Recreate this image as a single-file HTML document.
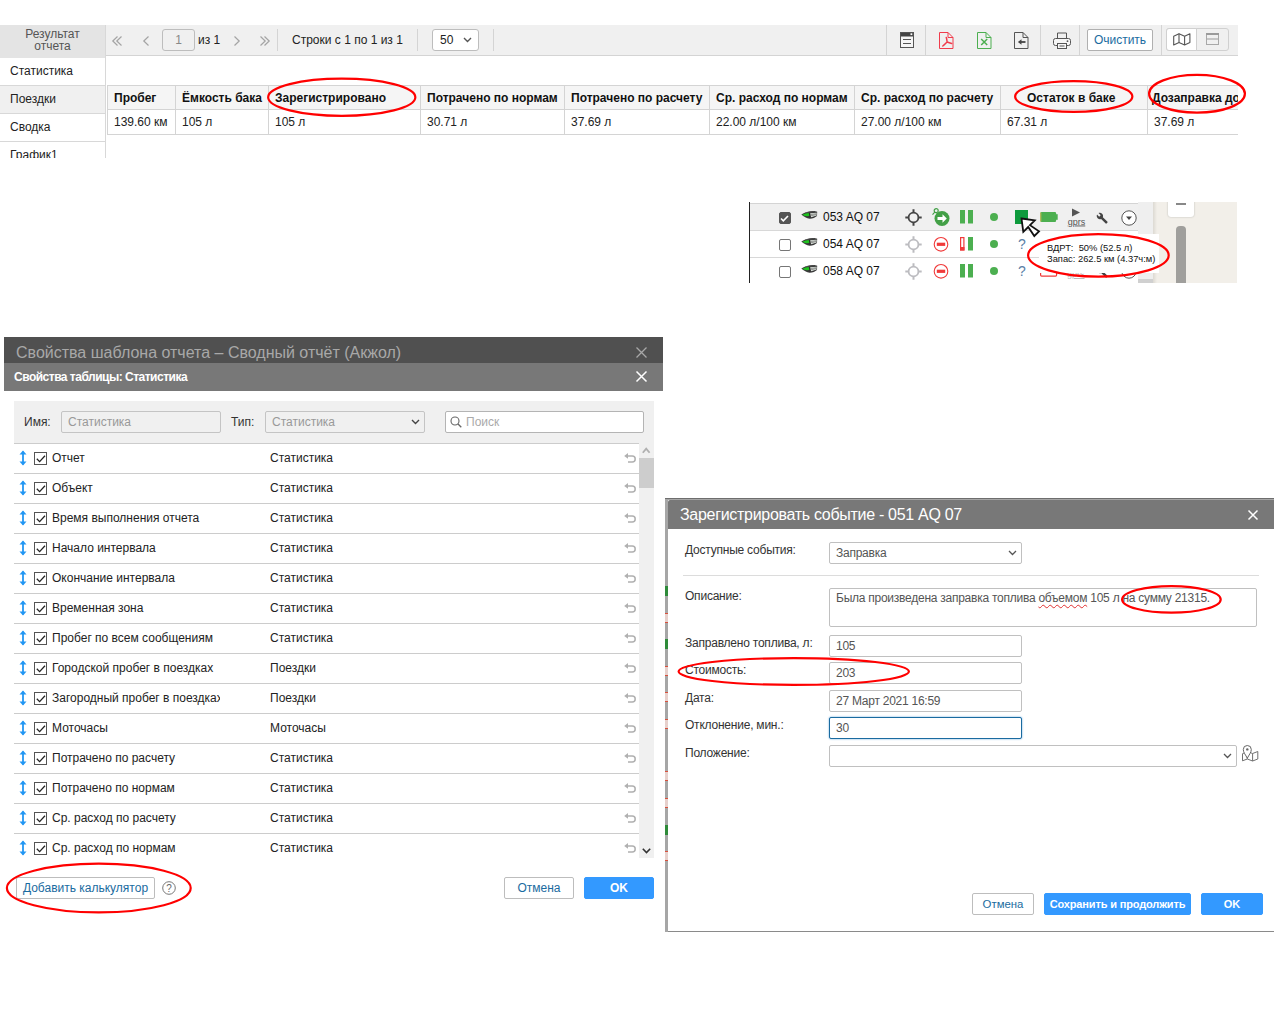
<!DOCTYPE html>
<html lang="ru">
<head>
<meta charset="utf-8">
<title>Отчёт</title>
<style>
*{box-sizing:border-box;margin:0;padding:0}
html,body{width:1280px;height:1024px;overflow:hidden;background:#fff}
body{position:relative;font-family:"Liberation Sans",Arial,sans-serif;font-size:12px;color:#222}
.abs{position:absolute}
.t{position:absolute;white-space:nowrap;line-height:14px}
svg{position:absolute;overflow:visible}
.ell{position:absolute;border:2px solid #e8121c;border-radius:50%}

/* ---------- section 1: report result ---------- */
#s1{position:absolute;left:0;top:25px;width:1238px;height:133px;overflow:hidden;background:#fff}
#s1 .side{position:absolute;left:0;top:0;width:106px;height:133px;border-right:1px solid #d8d8d8}
#s1 .side .hd{position:absolute;left:0;top:0;width:105px;height:33px;background:#e4e4e4;color:#555;text-align:center;line-height:12px;padding-top:3px}
#s1 .side .it{position:absolute;left:0;width:105px;height:28px;border-bottom:1px solid #d8d8d8;padding-left:10px;line-height:27px;color:#222}
#s1 .bar{position:absolute;left:106px;top:0;width:1132px;height:31px;background:#f0f0f0;border-bottom:1px solid #d4d4d4}
#s1 .sep{position:absolute;top:4px;width:1px;height:22px;background:#d4d4d4}
#s1 .pg{position:absolute;color:#aaa;font-size:17px;line-height:20px;top:4px}
#s1 .box{position:absolute;top:4px;height:22px;border:1px solid #bdbdbd;border-radius:3px;background:#fff}
table.res{position:absolute;left:107px;top:60px;border-collapse:collapse;table-layout:fixed;width:1160px}
table.res td,table.res th{border:1px solid #d4d4d4;padding:0 0 0 6px;text-align:left;white-space:nowrap;overflow:hidden;font-size:12px}
table.res th{background:#f5f5f5;height:24px;font-weight:bold;color:#111}
table.res td{height:25px;color:#222}

/* ---------- section 2: unit list ---------- */
#s2{position:absolute;left:749px;top:202px;width:488px;height:81px;overflow:hidden;background:#fff}
#s2 .row{position:absolute;left:1px;width:388px;height:27px;border-top:1px solid #d8d8d8;background:#fff}
#s2 .nm{position:absolute;left:73px;top:6px;font-size:12px;line-height:14px;color:#111;white-space:nowrap}
#s2 .cb{position:absolute;left:29px;top:8px;width:12px;height:12px;border:1px solid #767676;border-radius:2px;background:#fff}
#s2 .q{position:absolute;left:268px;top:5px;font-size:14px;line-height:16px;color:#5b7fa6}

/* ---------- section 3: table properties dialog ---------- */
#s3{position:absolute;left:4px;top:337px;width:659px;height:600px}
#s3 .t1{position:absolute;left:0;top:0;width:659px;height:26px;background:#505050;color:#a8a8a8;font-size:16px;line-height:24px;padding:4px 0 0 12px;white-space:nowrap;overflow:hidden}
#s3 .t2{position:absolute;left:0;top:26px;width:659px;height:28px;background:#787878;color:#fff;font-weight:bold;font-size:12px;line-height:28px;padding-left:10px;letter-spacing:-.5px}
#s3 .flt{position:absolute;left:10px;top:64px;width:640px;height:43px;background:#f0f0f0}
#s3 .in{position:absolute;top:10px;height:22px;border:1px solid #c4c4c4;border-radius:2px;background:#f0f0f0;color:#999;line-height:20px;padding-left:6px;font-size:12px}
#s3 .lst{position:absolute;left:10px;top:106px;width:625px;height:414px;overflow:hidden}
#s3 .r{position:relative;height:30px;border-top:1px solid #ccc;font-size:12px;line-height:14px;color:#222}
#s3 .r .a{position:absolute;left:38px;top:7px;width:168px;overflow:hidden;white-space:nowrap}
#s3 .r .b{position:absolute;left:256px;top:7px;white-space:nowrap}
#s3 .r .c{position:absolute;left:20px;top:8px;width:13px;height:13px;border:1px solid #555;background:#fff}
.btn{position:absolute;height:22px;border:1px solid #bdbdbd;border-radius:2px;background:#fff;color:#1a6ba0;font-size:12px;line-height:20px;text-align:center;white-space:nowrap}
.btn.p{background:#3399ff;border-color:#3399ff;color:#fff;font-weight:bold}

/* ---------- section 4: register event dialog ---------- */
#s4{position:absolute;left:665px;top:498px;width:609px;height:434px;overflow:hidden}
#s4 .dlg{position:absolute;left:3px;top:2px;width:606px;height:432px;background:#fff;border-bottom:1px solid #8a8a8a}
#s4 .tt{position:absolute;left:0;top:0;width:606px;height:29px;background:#787878;color:#fff;font-size:16px;line-height:29px;padding-left:12px;white-space:nowrap;letter-spacing:-.3px;border-radius:2px 0 0 0}
#s4 .lb{position:absolute;left:17px;font-size:12px;line-height:14px;color:#333;white-space:nowrap;letter-spacing:-.22px}
#s4 .in{position:absolute;left:161px;width:193px;height:22px;border:1px solid #c0c0c0;border-radius:2px;background:#fff;color:#555;font-size:12px;line-height:20px;padding-left:6px;white-space:nowrap;letter-spacing:-.25px}
</style>
</head>
<body>

<!-- ================= SECTION 1 ================= -->
<div id="s1">
  <div class="side">
    <div class="hd">Результат<br>отчета</div>
    <div class="it" style="top:33px">Статистика</div>
    <div class="it" style="top:61px;background:#f0f0f0">Поездки</div>
    <div class="it" style="top:89px">Сводка</div>
    <div class="it" style="top:117px">График1</div>
  </div>
  <div class="bar">
    <svg style="left:6px;top:11px" width="10" height="10" viewBox="0 0 10 10"><path d="M5.500 0.500l-4.700 4.500l4.700 4.500M9.500 0.500l-4.700 4.500l4.700 4.500" fill="none" stroke="#a4a4a4" stroke-width="1.200"/></svg>
    <svg style="left:37px;top:11px" width="6" height="10" viewBox="0 0 6 10"><path d="M5.500 0.500l-4.700 4.500l4.700 4.500" fill="none" stroke="#a4a4a4" stroke-width="1.200"/></svg>
    <div class="box" style="left:56px;width:33px;background:#f0f0f0;text-align:center;line-height:20px;color:#888">1</div>
    <span class="t" style="left:92px;top:8px">из 1</span>
    <svg style="left:128px;top:11px" width="6" height="10" viewBox="0 0 6 10"><path d="M0.500 0.500l4.700 4.500l-4.700 4.500" fill="none" stroke="#a4a4a4" stroke-width="1.200"/></svg>
    <svg style="left:154px;top:11px" width="10" height="10" viewBox="0 0 10 10"><path d="M0.500 0.500l4.700 4.500l-4.700 4.500M4.500 0.500l4.700 4.500l-4.700 4.500" fill="none" stroke="#a4a4a4" stroke-width="1.200"/></svg>
    <div class="sep" style="left:171px"></div>
    <span class="t" style="left:186px;top:8px">Строки с 1 по 1 из 1</span>
    <div class="sep" style="left:311px"></div>
    <div class="box" style="left:326px;width:47px;line-height:20px;padding-left:7px">50</div>
    <div class="sep" style="left:387px"></div>
    <div class="sep" style="left:780px;top:0;height:30px"></div>
    <div class="sep" style="left:819px;top:0;height:30px"></div>
    <div class="sep" style="left:934px;top:0;height:30px"></div>
    <div class="sep" style="left:973px;top:0;height:30px"></div>
    <div class="box" style="left:981px;width:66px;text-align:center;line-height:20px;color:#1a6ba0;border-radius:2px;border-color:#b0b0b0">Очистить</div>

    <!-- toolbar icons -->
    <svg style="left:794px;top:7px" width="14" height="16" viewBox="0 0 14 16"><rect x="0.5" y="0.5" width="13" height="15" fill="#f6f6f6" stroke="#555"/><rect x="1" y="1" width="12" height="3.5" fill="#444"/><rect x="10.500" y="1.300" width="1.800" height="1.800" fill="#fff"/><path d="M3 7.500h8M3 11.500h8" stroke="#555" stroke-width="1.200"/></svg>
    <svg style="left:833px;top:7px" width="15" height="17" viewBox="0 0 15 17"><path d="M0.5 0.5h8.500l5 5v11h-13.500z" fill="none" stroke="#f03c4c"/><path d="M9 0.5v5h5" fill="none" stroke="#f03c4c"/><path d="M7.300 5.500c.6 1.800.6 3.200.8 4.500M8.100 10c-1.300 1.200-2.600 2.700-4.300 4M8.100 10c1.500.6 3 1.300 4.600 1.500" fill="none" stroke="#f03c4c" stroke-width="1.500" stroke-linecap="round"/></svg>
    <svg style="left:871px;top:7px" width="15" height="17" viewBox="0 0 15 17"><path d="M0.5 0.5h8.500l5 5v11h-13.500z" fill="none" stroke="#4caf50"/><path d="M9 0.5v5h5" fill="none" stroke="#4caf50"/><path d="M4.200 7l6 6M10.200 7l-6 6" stroke="#4caf50" stroke-width="1.500" fill="none"/></svg>
    <svg style="left:908px;top:7px" width="15" height="17" viewBox="0 0 15 17"><path d="M0.5 0.5h8.500l5 5v11h-13.500z" fill="none" stroke="#555"/><path d="M9 0.5v5h5" fill="none" stroke="#555"/><path d="M11.500 10h-5" stroke="#444" stroke-width="1.800"/><path d="M7.500 7.200v5.600l-3.600-2.800z" fill="#444"/></svg>
    <svg style="left:947px;top:7px" width="18" height="17" viewBox="0 0 18 17"><path d="M4.500 6.500v-5.500h9v5.500" fill="none" stroke="#555"/><rect x="0.5" y="6.500" width="17" height="7" rx="2" fill="#f6f6f6" stroke="#555"/><rect x="4.500" y="11.500" width="9" height="5" fill="#f6f6f6" stroke="#555"/><path d="M6.500 14h5" stroke="#555"/><circle cx="14.500" cy="9.200" r="0.900" fill="#555"/></svg>
    <svg style="left:357px;top:12px" width="9" height="6" viewBox="0 0 9 6"><path d="M1 1l3.500 3.500l3.500-3.500" fill="none" stroke="#555" stroke-width="1.400"/></svg>
    <div class="sep" style="left:1055px;top:0;height:30px"></div>
    <div class="box" style="left:1060px;width:63px;top:3px;height:23px;background:#f0f0f0;border-color:#d0d0d0"></div>
    <div class="box" style="left:1060px;width:31px;top:3px;height:23px;border-radius:3px 0 0 3px;border-color:#d0d0d0"></div>
    <svg style="left:1067px;top:8px" width="18" height="13" viewBox="0 0 18 13"><path d="M0.700 3.200l5.300-2.500l5.600 2.500l5.300-2.500v8.800l-5.300 2.500l-5.600-2.500l-5.300 2.500z" fill="none" stroke="#555" stroke-width="1.100" stroke-linejoin="round"/><path d="M6 0.700v8.800M11.600 3.200v8.800" stroke="#555" stroke-width="1.100"/></svg>
    <svg style="left:1100px;top:8px" width="13" height="12" viewBox="0 0 13 12"><rect x="0.500" y="0.500" width="12" height="11" fill="none" stroke="#a8a8a8" stroke-width="1"/><path d="M0 1h13" stroke="#9a9a9a" stroke-width="2"/><path d="M0.500 6h12" stroke="#a8a8a8" stroke-width="1.200"/></svg>
  </div>
  <div class="abs" style="left:0;top:0;width:1238px;height:133px;overflow:hidden;pointer-events:none"><table class="res">
    <colgroup><col style="width:68px"><col style="width:93px"><col style="width:152px"><col style="width:144px"><col style="width:145px"><col style="width:145px"><col style="width:146px"><col style="width:147px"><col style="width:120px"></colgroup>
    <tr><th>Пробег</th><th>Ёмкость бака</th><th>Зарегистрировано</th><th>Потрачено по нормам</th><th>Потрачено по расчету</th><th>Ср. расход по нормам</th><th>Ср. расход по расчету</th><th style="padding-left:26px">Остаток в баке</th><th style="padding-left:4px">Дозаправка до</th></tr>
    <tr><td>139.60 км</td><td>105 л</td><td>105 л</td><td>30.71 л</td><td>37.69 л</td><td>22.00 л/100 км</td><td>27.00 л/100 км</td><td>67.31 л</td><td>37.69 л</td></tr>
  </table></div>
</div>

<!-- ================= SECTION 2 ================= -->
<div id="s2">
  <div class="abs" style="left:0;top:0;width:1px;height:81px;background:#222"></div>
  <div class="row" style="top:1px;height:28px;background:#f0f0f0;border-top:1px solid #d4d4d4"><div class="cb" style="top:8px;background:#555;border-color:#555"></div><svg style="left:30px;top:11px" width="9" height="7" viewBox="0 0 9 7"><path d="M1 3.500l2.300 2.300l4.700-4.800" fill="none" stroke="#fff" stroke-width="1.600"/></svg><svg style="left:51px;top:7px" width="17" height="8" viewBox="0 0 17 8"><path d="M0.300 3.600c3.500-2.200 8-3.600 11.500-3.600c2 0 3.500.3 4.400.8l-.2 4.300c-1.800 1.600-4.300 2.500-7.300 2.700c-3-.3-6-2-8.400-4.200z" fill="#3a3a3a"/><path d="M1.300 3.700c2-1 4.300-1.600 6.800-1.800l.8 2.900c-2 .5-4.300.4-5.800-.1z" fill="#1fc41f"/><path d="M9.200 2.300l6.600-.6l-.2 2.700l-5.600 1.800z" fill="#e4ebe4"/><path d="M9.500 3.500l6.200-.8M4 1.800l9-1.300M9.800 4.800l5.800-1.300" stroke="#555" stroke-width=".6" fill="none"/><path d="M8.200 1.800l1 4.500" stroke="#222" stroke-width=".8"/></svg><span class="nm" style="top:6px">053 AQ 07</span><svg style="left:155px;top:5px" width="17" height="17" viewBox="0 0 17 17"><circle cx="8.500" cy="8.500" r="4.900" fill="none" stroke="#444" stroke-width="1.800"/><path d="M8.500 0.300v3.200M8.500 13.500v3.200M0.300 8.500h3.200M13.500 8.500h3.200" stroke="#444" stroke-width="2"/></svg><svg style="left:182px;top:4px" width="18" height="18" viewBox="0 0 18 18"><circle cx="10" cy="10.500" r="7.500" fill="#43a047"/><path d="M5.500 9h5v-2.700l4.300 4.200l-4.300 4.200v-2.700h-5z" fill="#fff"/><circle cx="4.200" cy="2.700" r="2" fill="#f0f0f0" stroke="#43a047" stroke-width="1.200"/><path d="M2.800 4.200l-2.300 2.400" stroke="#43a047" stroke-width="1.200"/></svg><svg style="left:210px;top:6px" width="13" height="14" viewBox="0 0 13 14"><rect x="0" y="0" width="5" height="13.500" fill="#4caf50"/><rect x="8" y="0" width="5" height="13.500" fill="#4caf50"/></svg><div class="abs" style="left:240px;top:9px;width:8px;height:8px;border-radius:50%;background:#4caf50"></div><div class="abs" style="left:265px;top:6px;width:13px;height:14px;background:#0d9a3c"></div><svg style="left:290px;top:8px" width="19" height="11" viewBox="0 0 19 11"><rect x="0.300" y="0" width="15.800" height="10" rx="1.200" fill="#4caf50"/><rect x="0.300" y="0.500" width="1" height="9" fill="#c8b850"/><rect x="16" y="2.200" width="1.700" height="5.600" fill="#4caf50"/></svg><svg style="left:317px;top:4px" width="19" height="19" viewBox="0 0 19 19"><path d="M5 0.500l8 4l-8 4z" fill="#555"/><text x="9.500" y="16.500" font-size="9" text-anchor="middle" fill="#555" font-family="Liberation Sans,sans-serif" text-decoration="underline">gprs</text></svg><svg style="left:345px;top:7px" width="14" height="14" viewBox="0 0 14 14"><path d="M12.500 11l-5.800-5.800c.6-1.500.2-3.200-1-4.300c-1.200-1.200-3-1.500-4.400-.8l2.700 2.700l-1.900 1.900l-2.700-2.700c-.7 1.500-.4 3.300.8 4.500c1.200 1.200 2.800 1.500 4.300.9l5.800 5.800c.3.300.7.300.9 0l1.300-1.300c.3-.3.300-.7 0-.9z" fill="#444" transform="translate(2.500 2) scale(.8)"/></svg><svg style="left:371px;top:6px" width="16" height="16" viewBox="0 0 16 16"><circle cx="8" cy="8" r="7.200" fill="#fff" stroke="#555" stroke-width="1"/><path d="M5 6.500h6l-3 3.500z" fill="#444"/></svg></div>
  <div class="row" style="top:28px"><div class="cb"></div><svg style="left:51px;top:7px" width="17" height="8" viewBox="0 0 17 8"><path d="M0.300 3.600c3.500-2.200 8-3.600 11.500-3.600c2 0 3.500.3 4.400.8l-.2 4.300c-1.800 1.600-4.300 2.500-7.300 2.700c-3-.3-6-2-8.400-4.200z" fill="#3a3a3a"/><path d="M1.300 3.700c2-1 4.300-1.600 6.800-1.800l.8 2.900c-2 .5-4.300.4-5.800-.1z" fill="#1fc41f"/><path d="M9.200 2.300l6.600-.6l-.2 2.700l-5.600 1.800z" fill="#e4ebe4"/><path d="M9.500 3.500l6.200-.8M4 1.800l9-1.300M9.800 4.800l5.800-1.300" stroke="#555" stroke-width=".6" fill="none"/><path d="M8.200 1.800l1 4.500" stroke="#222" stroke-width=".8"/></svg><span class="nm" style="top:6px">054 AQ 07</span><svg style="left:155px;top:5px" width="17" height="17" viewBox="0 0 17 17"><circle cx="8.500" cy="8.500" r="4.900" fill="none" stroke="#bcbcc0" stroke-width="1.800"/><path d="M8.500 0.300v3.200M8.500 13.500v3.200M0.300 8.500h3.200M13.500 8.500h3.200" stroke="#bcbcc0" stroke-width="2"/></svg><svg style="left:183px;top:5px" width="16" height="16" viewBox="0 0 16 16"><circle cx="8" cy="8.300" r="6.800" fill="#fff" stroke="#f03a3a" stroke-width="1.100"/><rect x="3.800" y="6.700" width="8.400" height="3.200" fill="#f03a3a"/></svg><svg style="left:210px;top:6px" width="13" height="14" viewBox="0 0 13 14"><rect x="0.600" y="0.600" width="3.300" height="12.300" fill="#fff" stroke="#f03a3a" stroke-width="1.200"/><rect x="0" y="10" width="4.500" height="3.500" fill="#f03a3a"/><rect x="8" y="0" width="5" height="13.500" fill="#4caf50"/></svg><div class="abs" style="left:240px;top:9px;width:8px;height:8px;border-radius:50%;background:#4caf50"></div><span class="q">?</span></div>
  <div class="row" style="top:55px"><div class="cb"></div><svg style="left:51px;top:7px" width="17" height="8" viewBox="0 0 17 8"><path d="M0.300 3.600c3.500-2.200 8-3.600 11.500-3.600c2 0 3.500.3 4.400.8l-.2 4.300c-1.800 1.600-4.300 2.500-7.300 2.700c-3-.3-6-2-8.400-4.200z" fill="#3a3a3a"/><path d="M1.300 3.700c2-1 4.300-1.600 6.800-1.800l.8 2.900c-2 .5-4.300.4-5.800-.1z" fill="#1fc41f"/><path d="M9.200 2.300l6.600-.6l-.2 2.700l-5.600 1.800z" fill="#e4ebe4"/><path d="M9.500 3.500l6.200-.8M4 1.800l9-1.300M9.800 4.800l5.800-1.300" stroke="#555" stroke-width=".6" fill="none"/><path d="M8.200 1.800l1 4.500" stroke="#222" stroke-width=".8"/></svg><span class="nm" style="top:6px">058 AQ 07</span><svg style="left:155px;top:5px" width="17" height="17" viewBox="0 0 17 17"><circle cx="8.500" cy="8.500" r="4.900" fill="none" stroke="#bcbcc0" stroke-width="1.800"/><path d="M8.500 0.300v3.200M8.500 13.500v3.200M0.300 8.500h3.200M13.500 8.500h3.200" stroke="#bcbcc0" stroke-width="2"/></svg><svg style="left:183px;top:5px" width="16" height="16" viewBox="0 0 16 16"><circle cx="8" cy="8.300" r="6.800" fill="#fff" stroke="#f03a3a" stroke-width="1.100"/><rect x="3.800" y="6.700" width="8.400" height="3.200" fill="#f03a3a"/></svg><svg style="left:210px;top:6px" width="13" height="14" viewBox="0 0 13 14"><rect x="0" y="0" width="5" height="13.500" fill="#4caf50"/><rect x="8" y="0" width="5" height="13.500" fill="#4caf50"/></svg><div class="abs" style="left:240px;top:9px;width:8px;height:8px;border-radius:50%;background:#4caf50"></div><span class="q">?</span><svg style="left:290px;top:8px" width="19" height="11" viewBox="0 0 19 11"><rect x="0.600" y="0.600" width="16" height="9.500" rx="1" fill="#fff" stroke="#f03a3a" stroke-width="1.200"/></svg><span class="abs" style="left:317px;top:11px;font-size:9px;line-height:10px;color:#bbb;text-decoration:underline">gprs</span><svg style="left:345px;top:7px" width="14" height="14" viewBox="0 0 14 14"><path d="M12.500 11l-5.800-5.800c.6-1.500.2-3.200-1-4.300c-1.200-1.200-3-1.500-4.400-.8l2.700 2.700l-1.900 1.900l-2.700-2.700c-.7 1.500-.4 3.300.8 4.500c1.200 1.200 2.800 1.500 4.300.9l5.800 5.800c.3.300.7.300.9 0l1.300-1.300c.3-.3.300-.7 0-.9z" fill="#444" transform="translate(2.500 2) scale(.8)"/></svg><svg style="left:371px;top:5px" width="16" height="16" viewBox="0 0 16 16"><circle cx="8" cy="8" r="7.200" fill="#fff" stroke="#555" stroke-width="1"/></svg></div>
  <div class="abs" style="left:389px;top:0;width:15px;height:81px;background:#efefef"></div><div class="abs" style="left:389px;top:77px;width:15px;height:4px;background:#d0d0d0"></div>
  <!-- map strip -->
  <div class="abs" style="left:404px;top:0;width:84px;height:81px;background:linear-gradient(90deg,#dcd9d2,#f2efe9 4px)"></div>
  <div class="abs" style="left:419px;top:-10px;width:26px;height:25px;background:#fff;border-radius:3px;box-shadow:0 0 2px rgba(0,0,0,.25)"></div>
  <div class="abs" style="left:427px;top:1px;width:10px;height:2px;background:#888"></div>
  <div class="abs" style="left:427px;top:24px;width:10px;height:70px;background:#a09f9c;border-radius:4px"></div>
  <!-- tooltip -->
  <div class="abs" style="left:290px;top:32px;width:120px;height:39px;background:#fff;font-size:9.350px;line-height:11px;color:#111;padding:9px 0 0 8px;white-space:nowrap">ВДРТ:&nbsp; 50% (52.5 л)<br>Запас: 262.5 км (4.37ч:м)</div>
  <!-- cursor -->
  <svg style="left:270.700px;top:15.200px" width="22" height="22" viewBox="0 0 22 22"><path d="M1.500 1.500l13.300 1.800l-4.800 4.900l9 6.100l-4.700 4.700l-6.100-9l-4.900 4.800z" fill="#fff" stroke="#111" stroke-width="1.800" stroke-linejoin="miter"/></svg>
</div>


<!-- ================= SECTION 3 ================= -->
<div id="s3">
  <div class="t1">Свойства шаблона отчета – Сводный отчёт (Акжол)</div>
  <svg style="left:632px;top:10px" width="11" height="11" viewBox="0 0 11 11"><path d="M0.500 0.500l10 10M10.500 0.500l-10 10" stroke="#a8a8a8" stroke-width="1.300"/></svg>
  <div class="t2">Свойства таблицы: Статистика</div>
  <svg style="left:632px;top:34px" width="11" height="11" viewBox="0 0 11 11"><path d="M0.500 0.500l10 10M10.500 0.500l-10 10" stroke="#fff" stroke-width="1.500"/></svg>
  <div class="flt">
    <span class="t" style="left:10px;top:14px;color:#333">Имя:</span>
    <div class="in" style="left:47px;width:160px">Статистика</div>
    <span class="t" style="left:217px;top:14px;color:#333">Тип:</span>
    <div class="in" style="left:251px;width:160px">Статистика</div>
    <svg style="left:397px;top:18px" width="9" height="6" viewBox="0 0 9 6"><path d="M1 1l3.500 3.500l3.500-3.500" fill="none" stroke="#444" stroke-width="1.400"/></svg>
    <div class="in" style="left:431px;width:199px;background:#fff;border-color:#b4b4b4;color:#aaa;padding-left:20px">Поиск</div>
    <svg style="left:436px;top:15px" width="12" height="12" viewBox="0 0 12 12"><circle cx="5" cy="5" r="4" fill="none" stroke="#666" stroke-width="1.100"/><path d="M8 8l3.300 3.300" stroke="#666" stroke-width="1.300"/></svg>
  </div>
  <div class="lst">
    <div class="r"><svg style="left:5px;top:6px" width="8" height="16" viewBox="0 0 8 16"><path d="M4 1.500v13" stroke="#2196f3" stroke-width="1.800"/><path d="M0.500 4.500l3.500-4l3.500 4zM0.500 11.500l3.500 4l3.500-4z" fill="#2196f3"/></svg><span class="c"></span><svg style="left:22px;top:11px" width="10" height="8" viewBox="0 0 10 8"><path d="M0.800 3.800l2.800 2.800l5.400-5.800" fill="none" stroke="#222" stroke-width="1.300"/></svg><span class="a">Отчет</span><span class="b">Статистика</span><svg style="left:610px;top:9px" width="12" height="10" viewBox="0 0 12 10"><path d="M0.200 2.900l3.800-2.800v5.600z" fill="#b0b0b0"/><path d="M3.500 2.900h4.700c1.700 0 3 1.300 3 3s-1.300 3-3 3h-4.200" fill="none" stroke="#b0b0b0" stroke-width="1.500"/></svg></div>
    <div class="r"><svg style="left:5px;top:6px" width="8" height="16" viewBox="0 0 8 16"><path d="M4 1.500v13" stroke="#2196f3" stroke-width="1.800"/><path d="M0.500 4.500l3.500-4l3.500 4zM0.500 11.500l3.500 4l3.500-4z" fill="#2196f3"/></svg><span class="c"></span><svg style="left:22px;top:11px" width="10" height="8" viewBox="0 0 10 8"><path d="M0.800 3.800l2.800 2.800l5.400-5.800" fill="none" stroke="#222" stroke-width="1.300"/></svg><span class="a">Объект</span><span class="b">Статистика</span><svg style="left:610px;top:9px" width="12" height="10" viewBox="0 0 12 10"><path d="M0.200 2.900l3.800-2.800v5.600z" fill="#b0b0b0"/><path d="M3.500 2.900h4.700c1.700 0 3 1.300 3 3s-1.300 3-3 3h-4.200" fill="none" stroke="#b0b0b0" stroke-width="1.500"/></svg></div>
    <div class="r"><svg style="left:5px;top:6px" width="8" height="16" viewBox="0 0 8 16"><path d="M4 1.500v13" stroke="#2196f3" stroke-width="1.800"/><path d="M0.500 4.500l3.500-4l3.500 4zM0.500 11.500l3.500 4l3.500-4z" fill="#2196f3"/></svg><span class="c"></span><svg style="left:22px;top:11px" width="10" height="8" viewBox="0 0 10 8"><path d="M0.800 3.800l2.800 2.800l5.400-5.800" fill="none" stroke="#222" stroke-width="1.300"/></svg><span class="a">Время выполнения отчета</span><span class="b">Статистика</span><svg style="left:610px;top:9px" width="12" height="10" viewBox="0 0 12 10"><path d="M0.200 2.900l3.800-2.800v5.600z" fill="#b0b0b0"/><path d="M3.500 2.900h4.700c1.700 0 3 1.300 3 3s-1.300 3-3 3h-4.200" fill="none" stroke="#b0b0b0" stroke-width="1.500"/></svg></div>
    <div class="r"><svg style="left:5px;top:6px" width="8" height="16" viewBox="0 0 8 16"><path d="M4 1.500v13" stroke="#2196f3" stroke-width="1.800"/><path d="M0.500 4.500l3.500-4l3.500 4zM0.500 11.500l3.500 4l3.500-4z" fill="#2196f3"/></svg><span class="c"></span><svg style="left:22px;top:11px" width="10" height="8" viewBox="0 0 10 8"><path d="M0.800 3.800l2.800 2.800l5.400-5.800" fill="none" stroke="#222" stroke-width="1.300"/></svg><span class="a">Начало интервала</span><span class="b">Статистика</span><svg style="left:610px;top:9px" width="12" height="10" viewBox="0 0 12 10"><path d="M0.200 2.900l3.800-2.800v5.600z" fill="#b0b0b0"/><path d="M3.500 2.900h4.700c1.700 0 3 1.300 3 3s-1.300 3-3 3h-4.200" fill="none" stroke="#b0b0b0" stroke-width="1.500"/></svg></div>
    <div class="r"><svg style="left:5px;top:6px" width="8" height="16" viewBox="0 0 8 16"><path d="M4 1.500v13" stroke="#2196f3" stroke-width="1.800"/><path d="M0.500 4.500l3.500-4l3.500 4zM0.500 11.500l3.500 4l3.500-4z" fill="#2196f3"/></svg><span class="c"></span><svg style="left:22px;top:11px" width="10" height="8" viewBox="0 0 10 8"><path d="M0.800 3.800l2.800 2.800l5.400-5.800" fill="none" stroke="#222" stroke-width="1.300"/></svg><span class="a">Окончание интервала</span><span class="b">Статистика</span><svg style="left:610px;top:9px" width="12" height="10" viewBox="0 0 12 10"><path d="M0.200 2.900l3.800-2.800v5.600z" fill="#b0b0b0"/><path d="M3.500 2.900h4.700c1.700 0 3 1.300 3 3s-1.300 3-3 3h-4.200" fill="none" stroke="#b0b0b0" stroke-width="1.500"/></svg></div>
    <div class="r"><svg style="left:5px;top:6px" width="8" height="16" viewBox="0 0 8 16"><path d="M4 1.500v13" stroke="#2196f3" stroke-width="1.800"/><path d="M0.500 4.500l3.500-4l3.500 4zM0.500 11.500l3.500 4l3.500-4z" fill="#2196f3"/></svg><span class="c"></span><svg style="left:22px;top:11px" width="10" height="8" viewBox="0 0 10 8"><path d="M0.800 3.800l2.800 2.800l5.400-5.800" fill="none" stroke="#222" stroke-width="1.300"/></svg><span class="a">Временная зона</span><span class="b">Статистика</span><svg style="left:610px;top:9px" width="12" height="10" viewBox="0 0 12 10"><path d="M0.200 2.900l3.800-2.800v5.600z" fill="#b0b0b0"/><path d="M3.500 2.900h4.700c1.700 0 3 1.300 3 3s-1.300 3-3 3h-4.200" fill="none" stroke="#b0b0b0" stroke-width="1.500"/></svg></div>
    <div class="r"><svg style="left:5px;top:6px" width="8" height="16" viewBox="0 0 8 16"><path d="M4 1.500v13" stroke="#2196f3" stroke-width="1.800"/><path d="M0.500 4.500l3.500-4l3.500 4zM0.500 11.500l3.500 4l3.500-4z" fill="#2196f3"/></svg><span class="c"></span><svg style="left:22px;top:11px" width="10" height="8" viewBox="0 0 10 8"><path d="M0.800 3.800l2.800 2.800l5.400-5.800" fill="none" stroke="#222" stroke-width="1.300"/></svg><span class="a">Пробег по всем сообщениям</span><span class="b">Статистика</span><svg style="left:610px;top:9px" width="12" height="10" viewBox="0 0 12 10"><path d="M0.200 2.900l3.800-2.800v5.600z" fill="#b0b0b0"/><path d="M3.500 2.900h4.700c1.700 0 3 1.300 3 3s-1.300 3-3 3h-4.200" fill="none" stroke="#b0b0b0" stroke-width="1.500"/></svg></div>
    <div class="r"><svg style="left:5px;top:6px" width="8" height="16" viewBox="0 0 8 16"><path d="M4 1.500v13" stroke="#2196f3" stroke-width="1.800"/><path d="M0.500 4.500l3.500-4l3.500 4zM0.500 11.500l3.500 4l3.500-4z" fill="#2196f3"/></svg><span class="c"></span><svg style="left:22px;top:11px" width="10" height="8" viewBox="0 0 10 8"><path d="M0.800 3.800l2.800 2.800l5.400-5.800" fill="none" stroke="#222" stroke-width="1.300"/></svg><span class="a">Городской пробег в поездках</span><span class="b">Поездки</span><svg style="left:610px;top:9px" width="12" height="10" viewBox="0 0 12 10"><path d="M0.200 2.900l3.800-2.800v5.600z" fill="#b0b0b0"/><path d="M3.500 2.900h4.700c1.700 0 3 1.300 3 3s-1.300 3-3 3h-4.200" fill="none" stroke="#b0b0b0" stroke-width="1.500"/></svg></div>
    <div class="r"><svg style="left:5px;top:6px" width="8" height="16" viewBox="0 0 8 16"><path d="M4 1.500v13" stroke="#2196f3" stroke-width="1.800"/><path d="M0.500 4.500l3.500-4l3.500 4zM0.500 11.500l3.500 4l3.500-4z" fill="#2196f3"/></svg><span class="c"></span><svg style="left:22px;top:11px" width="10" height="8" viewBox="0 0 10 8"><path d="M0.800 3.800l2.800 2.800l5.400-5.800" fill="none" stroke="#222" stroke-width="1.300"/></svg><span class="a">Загородный пробег в поездках</span><span class="b">Поездки</span><svg style="left:610px;top:9px" width="12" height="10" viewBox="0 0 12 10"><path d="M0.200 2.900l3.800-2.800v5.600z" fill="#b0b0b0"/><path d="M3.500 2.900h4.700c1.700 0 3 1.300 3 3s-1.300 3-3 3h-4.200" fill="none" stroke="#b0b0b0" stroke-width="1.500"/></svg></div>
    <div class="r"><svg style="left:5px;top:6px" width="8" height="16" viewBox="0 0 8 16"><path d="M4 1.500v13" stroke="#2196f3" stroke-width="1.800"/><path d="M0.500 4.500l3.500-4l3.500 4zM0.500 11.500l3.500 4l3.500-4z" fill="#2196f3"/></svg><span class="c"></span><svg style="left:22px;top:11px" width="10" height="8" viewBox="0 0 10 8"><path d="M0.800 3.800l2.800 2.800l5.400-5.800" fill="none" stroke="#222" stroke-width="1.300"/></svg><span class="a">Моточасы</span><span class="b">Моточасы</span><svg style="left:610px;top:9px" width="12" height="10" viewBox="0 0 12 10"><path d="M0.200 2.900l3.800-2.800v5.600z" fill="#b0b0b0"/><path d="M3.500 2.900h4.700c1.700 0 3 1.300 3 3s-1.300 3-3 3h-4.200" fill="none" stroke="#b0b0b0" stroke-width="1.500"/></svg></div>
    <div class="r"><svg style="left:5px;top:6px" width="8" height="16" viewBox="0 0 8 16"><path d="M4 1.500v13" stroke="#2196f3" stroke-width="1.800"/><path d="M0.500 4.500l3.500-4l3.500 4zM0.500 11.500l3.500 4l3.500-4z" fill="#2196f3"/></svg><span class="c"></span><svg style="left:22px;top:11px" width="10" height="8" viewBox="0 0 10 8"><path d="M0.800 3.800l2.800 2.800l5.400-5.800" fill="none" stroke="#222" stroke-width="1.300"/></svg><span class="a">Потрачено по расчету</span><span class="b">Статистика</span><svg style="left:610px;top:9px" width="12" height="10" viewBox="0 0 12 10"><path d="M0.200 2.900l3.800-2.800v5.600z" fill="#b0b0b0"/><path d="M3.500 2.900h4.700c1.700 0 3 1.300 3 3s-1.300 3-3 3h-4.200" fill="none" stroke="#b0b0b0" stroke-width="1.500"/></svg></div>
    <div class="r"><svg style="left:5px;top:6px" width="8" height="16" viewBox="0 0 8 16"><path d="M4 1.500v13" stroke="#2196f3" stroke-width="1.800"/><path d="M0.500 4.500l3.500-4l3.500 4zM0.500 11.500l3.500 4l3.500-4z" fill="#2196f3"/></svg><span class="c"></span><svg style="left:22px;top:11px" width="10" height="8" viewBox="0 0 10 8"><path d="M0.800 3.800l2.800 2.800l5.400-5.800" fill="none" stroke="#222" stroke-width="1.300"/></svg><span class="a">Потрачено по нормам</span><span class="b">Статистика</span><svg style="left:610px;top:9px" width="12" height="10" viewBox="0 0 12 10"><path d="M0.200 2.900l3.800-2.800v5.600z" fill="#b0b0b0"/><path d="M3.500 2.900h4.700c1.700 0 3 1.300 3 3s-1.300 3-3 3h-4.200" fill="none" stroke="#b0b0b0" stroke-width="1.500"/></svg></div>
    <div class="r"><svg style="left:5px;top:6px" width="8" height="16" viewBox="0 0 8 16"><path d="M4 1.500v13" stroke="#2196f3" stroke-width="1.800"/><path d="M0.500 4.500l3.500-4l3.500 4zM0.500 11.500l3.500 4l3.500-4z" fill="#2196f3"/></svg><span class="c"></span><svg style="left:22px;top:11px" width="10" height="8" viewBox="0 0 10 8"><path d="M0.800 3.800l2.800 2.800l5.400-5.800" fill="none" stroke="#222" stroke-width="1.300"/></svg><span class="a">Ср. расход по расчету</span><span class="b">Статистика</span><svg style="left:610px;top:9px" width="12" height="10" viewBox="0 0 12 10"><path d="M0.200 2.900l3.800-2.800v5.600z" fill="#b0b0b0"/><path d="M3.500 2.900h4.700c1.700 0 3 1.300 3 3s-1.300 3-3 3h-4.200" fill="none" stroke="#b0b0b0" stroke-width="1.500"/></svg></div>
    <div class="r"><svg style="left:5px;top:6px" width="8" height="16" viewBox="0 0 8 16"><path d="M4 1.500v13" stroke="#2196f3" stroke-width="1.800"/><path d="M0.500 4.500l3.500-4l3.500 4zM0.500 11.500l3.500 4l3.500-4z" fill="#2196f3"/></svg><span class="c"></span><svg style="left:22px;top:11px" width="10" height="8" viewBox="0 0 10 8"><path d="M0.800 3.800l2.800 2.800l5.400-5.800" fill="none" stroke="#222" stroke-width="1.300"/></svg><span class="a">Ср. расход по нормам</span><span class="b">Статистика</span><svg style="left:610px;top:9px" width="12" height="10" viewBox="0 0 12 10"><path d="M0.200 2.900l3.800-2.800v5.600z" fill="#b0b0b0"/><path d="M3.500 2.900h4.700c1.700 0 3 1.300 3 3s-1.300 3-3 3h-4.200" fill="none" stroke="#b0b0b0" stroke-width="1.500"/></svg></div>
  </div>
  <!-- scrollbar -->
  <div class="abs" style="left:635px;top:106px;width:15px;height:415px;background:#f0f0f0"></div>
  <div class="abs" style="left:635px;top:121px;width:15px;height:30px;background:#cdcdcd"></div>
  <svg style="left:637.800px;top:109.500px" width="9" height="7" viewBox="0 0 9 7"><path d="M0.800 5.800l3.400-4.200l3.400 4.200" fill="none" stroke="#b0b0b0" stroke-width="1.800"/></svg>
  <svg style="left:638px;top:511px" width="9" height="6" viewBox="0 0 9 6"><path d="M0.800 0.800l3.700 3.800l3.700-3.800" fill="none" stroke="#333" stroke-width="1.600"/></svg>
  <div class="btn" style="left:12px;top:540px;width:139px">Добавить калькулятор</div>
  <svg style="left:158px;top:544px" width="14" height="14" viewBox="0 0 14 14"><circle cx="7" cy="7" r="6.300" fill="#fff" stroke="#777" stroke-width="1"/><text x="7" y="10.500" font-size="10" text-anchor="middle" fill="#666" font-family="Liberation Sans,sans-serif">?</text></svg>
  <div class="btn" style="left:500px;top:540px;width:70px">Отмена</div>
  <div class="btn p" style="left:580px;top:540px;width:70px;font-size:12px">OK</div>
</div>


<!-- ================= SECTION 4 ================= -->
<div id="s4">
  <!-- background strip of underlying page -->
  <div class="abs" style="left:0;top:0;width:609px;height:1px;background:#6e6e6e"></div>
  <div class="abs" style="left:0;top:1px;width:609px;height:1px;background:#a6a6a6"></div>
  <div class="abs" style="left:0;top:1px;width:3px;height:433px;background:#a6a6a6"></div>
  <div class="abs" style="left:0;top:88px;width:3px;height:10px;background:#2e8b3a"></div>
  <div class="abs" style="left:0;top:141px;width:3px;height:10px;background:#2e8b3a"></div>
  <div class="abs" style="left:0;top:327px;width:3px;height:10px;background:#2e8b3a"></div>
  <div class="abs" style="left:0;top:115px;width:3px;height:10px;background:#e6d0cc;border-top:1px solid #d8503c;border-bottom:1px solid #d8503c"></div>
  <div class="abs" style="left:0;top:168px;width:3px;height:10px;background:#e6d0cc;border-top:1px solid #d8503c;border-bottom:1px solid #d8503c"></div>
  <div class="abs" style="left:0;top:194px;width:3px;height:10px;background:#e6d0cc;border-top:1px solid #d8503c;border-bottom:1px solid #d8503c"></div>
  <div class="abs" style="left:0;top:221px;width:3px;height:10px;background:#e6d0cc;border-top:1px solid #d8503c;border-bottom:1px solid #d8503c"></div>
  <div class="abs" style="left:0;top:273px;width:3px;height:10px;background:#e6d0cc;border-top:1px solid #d8503c;border-bottom:1px solid #d8503c"></div>
  <div class="abs" style="left:0;top:300px;width:3px;height:10px;background:#e6d0cc;border-top:1px solid #d8503c;border-bottom:1px solid #d8503c"></div>
  <div class="abs" style="left:0;top:353px;width:3px;height:10px;background:#e6d0cc;border-top:1px solid #d8503c;border-bottom:1px solid #d8503c"></div>
  <div class="dlg">
    <div class="tt">Зарегистрировать событие - 051 AQ 07</div>
    <svg style="left:580px;top:10px" width="10" height="10" viewBox="0 0 10 10"><path d="M0.500 0.500l9 9M9.500 0.500l-9 9" stroke="#fff" stroke-width="1.500"/></svg>
    <span class="lb" style="top:43px">Доступные события:</span>
    <div class="in" style="top:42px">Заправка</div>
    <svg style="left:340px;top:50px" width="9" height="6" viewBox="0 0 9 6"><path d="M1 1l3.500 3.500l3.500-3.500" fill="none" stroke="#555" stroke-width="1.300"/></svg>
    <div class="abs" style="left:15px;top:75px;width:576px;height:1px;background:#dcdcdc"></div>
    <span class="lb" style="top:89px">Описание:</span>
    <div class="in" style="top:88px;width:428px;height:39px;line-height:19px">Была произведена заправка топлива <span style="text-decoration:underline wavy #e03030;text-decoration-thickness:1px;text-underline-offset:2px">объемом</span> 105 л на сумму 21315.</div>
    <span class="lb" style="top:136px">Заправлено топлива, л:</span>
    <div class="in" style="top:135px">105</div>
    <span class="lb" style="top:163px">Стоимость:</span>
    <div class="in" style="top:162px">203</div>
    <span class="lb" style="top:191px">Дата:</span>
    <div class="in" style="top:190px">27 Март 2021 16:59</div>
    <span class="lb" style="top:218px">Отклонение, мин.:</span>
    <div class="in" style="top:217px;border-color:#1a6ba0;box-shadow:0 0 2px #5aa0d8">30</div>
    <span class="lb" style="top:246px">Положение:</span>
    <div class="in" style="top:245px;width:408px"></div>
    <svg style="left:555px;top:253px" width="9" height="6" viewBox="0 0 9 6"><path d="M1 1l3.500 3.500l3.500-3.500" fill="none" stroke="#555" stroke-width="1.300"/></svg>
    <svg style="left:574px;top:245px" width="17" height="17" viewBox="0 0 17 17"><path d="M2.200 8l-1.700.7v7.100l4.800-1.800l5.300 2l5.200-2v-7.500l-5.200 2l-2-.8" fill="none" stroke="#707070" stroke-width="1" stroke-linejoin="round"/><path d="M5.300 11.500v2.500M10.600 8.500v7.500" stroke="#707070" stroke-width="1"/><path d="M5.300 13.200c-1.600-3.200-4-5.700-4-8.700a4 4 0 1 1 8 0c0 3-2.400 5.500-4 8.700z" fill="#fff" stroke="#666" stroke-width="1"/><circle cx="5.300" cy="4.400" r="1.200" fill="#666"/></svg>
    <div class="btn" style="left:304px;top:393px;width:62px;font-size:11.400px">Отмена</div>
    <div class="btn p" style="left:376px;top:393px;width:147px;font-size:11px;letter-spacing:-.15px">Сохранить и продолжить</div>
    <div class="btn p" style="left:533px;top:393px;width:62px;font-size:11px">OK</div>
  </div>
</div>


<!-- red annotation ellipses -->
<svg style="left:0;top:0;pointer-events:none" width="1280" height="1024" viewBox="0 0 1280 1024" fill="none" stroke="#ff0000" stroke-width="2.200">
  <ellipse cx="341.75" cy="97.25" rx="73.60" ry="18.60"/>
  <ellipse cx="1073.75" cy="96.50" rx="58.60" ry="15.40"/>
  <ellipse cx="1197.00" cy="93.75" rx="47.90" ry="18.90"/>
  <ellipse cx="1098.40" cy="255.35" rx="70.30" ry="21.25"/>
  <ellipse cx="98.80" cy="888.00" rx="91.90" ry="24.40"/>
  <ellipse cx="1171.40" cy="599.40" rx="49.30" ry="13.30"/>
  <ellipse cx="793.75" cy="671.50" rx="115.15" ry="13.40"/>
</svg>
</body>
</html>
